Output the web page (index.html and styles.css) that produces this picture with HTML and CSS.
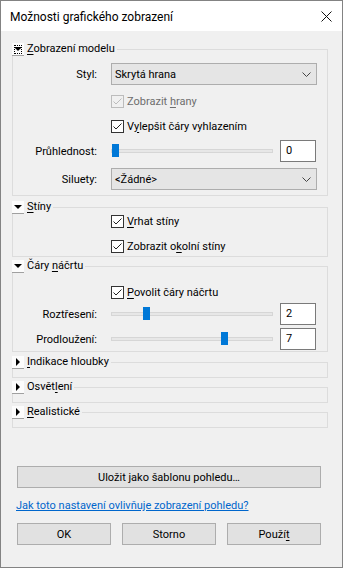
FILE: index.html
```html
<!DOCTYPE html>
<html lang="cs">
<head>
  <meta charset="UTF-8">
  <title>Možnosti grafického zobrazení</title>
  <link rel="stylesheet" href="styles.css">
</head>
<body>
  <div class="window">
    <div class="titlebar">
      <span class="title">Možnosti grafického zobrazení</span>
      <svg class="close" width="11" height="11" viewBox="0 0 11 11">
        <path d="M0.5 0.5 L10.5 10.5 M10.5 0.5 L0.5 10.5" stroke="#111" stroke-width="1" fill="none"/>
      </svg>
    </div>

    <div class="content">
      <!-- Zobrazeni modelu -->
      <fieldset class="group group-model">
        <legend>
          <span class="toggle focused"><span class="arrow-down"></span></span>
          <span class="caption"><u>Z</u>obrazení modelu</span>
        </legend>
        <div class="field first-select">
          <span class="label">Styl:</span>
          <div class="select">Skrytá hrana
            <svg class="chevron" width="9" height="5" viewBox="0 0 9 5"><path d="M0.5 0.5 L4.5 4.5 L8.5 0.5" stroke="#444" fill="none"/></svg>
          </div>
        </div>
        <div class="check-row hrany">
          <span class="check disabled">
            <svg width="11" height="11" viewBox="0 0 11 11"><path d="M1.5 5.5 L4 8 L9.5 2.5" stroke="#bcbcbc" fill="none"/></svg>
          </span>
          <span class="check-text disabled-text">Zobrazit <u>h</u>rany</span>
        </div>
        <div class="check-row vyhlazeni">
          <span class="check">
            <svg width="11" height="11" viewBox="0 0 11 11"><path d="M1.5 5.5 L4 8 L9.5 2.5" stroke="#222" fill="none"/></svg>
          </span>
          <span class="check-text">V<u>y</u>lepšit čáry vyhlazením</span>
        </div>
        <div class="field slider-row pruhlednost">
          <span class="label">Průhlednost:</span>
          <div class="slider"><span class="track"></span><span class="thumb" style="--v: 0"></span></div>
          <div class="number">0</div>
        </div>
        <div class="field siluety">
          <span class="label">Siluety:</span>
          <div class="select">&lt;Žádné&gt;
            <svg class="chevron" width="9" height="5" viewBox="0 0 9 5"><path d="M0.5 0.5 L4.5 4.5 L8.5 0.5" stroke="#444" fill="none"/></svg>
          </div>
        </div>
      </fieldset>

      <!-- Stiny -->
      <fieldset class="group group-shadows">
        <legend>
          <span class="toggle"><span class="arrow-down"></span></span>
          <span class="caption"><u>S</u>tíny</span>
        </legend>
        <div class="check-row">
          <span class="check">
            <svg width="11" height="11" viewBox="0 0 11 11"><path d="M1.5 5.5 L4 8 L9.5 2.5" stroke="#222" fill="none"/></svg>
          </span>
          <span class="check-text"><u>V</u>rhat stíny</span>
        </div>
        <div class="check-row okolni">
          <span class="check">
            <svg width="11" height="11" viewBox="0 0 11 11"><path d="M1.5 5.5 L4 8 L9.5 2.5" stroke="#222" fill="none"/></svg>
          </span>
          <span class="check-text">Zobrazit o<u>k</u>olní stíny</span>
        </div>
      </fieldset>

      <!-- Cary nacrtu -->
      <fieldset class="group group-sketch">
        <legend>
          <span class="toggle"><span class="arrow-down"></span></span>
          <span class="caption">Čáry <u>n</u>áčrtu</span>
        </legend>
        <div class="check-row povolit">
          <span class="check">
            <svg width="11" height="11" viewBox="0 0 11 11"><path d="M1.5 5.5 L4 8 L9.5 2.5" stroke="#222" fill="none"/></svg>
          </span>
          <span class="check-text"><u>P</u>ovolit čáry náčrtu</span>
        </div>
        <div class="field slider-row roztreseni">
          <span class="label">Roztřesení:</span>
          <div class="slider"><span class="track"></span><span class="thumb" style="--v: 2"></span></div>
          <div class="number">2</div>
        </div>
        <div class="field slider-row prodlouzeni">
          <span class="label">Prodloužení:</span>
          <div class="slider"><span class="track"></span><span class="thumb" style="--v: 7"></span></div>
          <div class="number">7</div>
        </div>
      </fieldset>

      <!-- Collapsed groups -->
      <fieldset class="group collapsed">
        <legend>
          <span class="toggle"><span class="arrow-right"></span></span>
          <span class="caption"><u>I</u>ndikace hloubky</span>
        </legend>
      </fieldset>
      <fieldset class="group collapsed">
        <legend>
          <span class="toggle"><span class="arrow-right"></span></span>
          <span class="caption">Osvět<u>l</u>ení</span>
        </legend>
      </fieldset>
      <fieldset class="group collapsed">
        <legend>
          <span class="toggle"><span class="arrow-right"></span></span>
          <span class="caption"><u>R</u>ealistické</span>
        </legend>
      </fieldset>

      <button class="btn save-btn">Uložit jako šablonu pohledu…</button>

      <a class="help-link" href="#">Jak toto nastavení ovlivňuje zobrazení pohledu?</a>

      <div class="buttons">
        <button class="btn">OK</button>
        <button class="btn">Storno</button>
        <button class="btn">Použí<u>t</u></button>
      </div>
    </div>
  </div>
</body>
</html>
```

FILE: styles.css
```css
body {
  margin: 0;
  font-family: Roboto, "Noto Sans", sans-serif;
  font-size: 11px;
  color: #000;
  background-color: #f0f0f0;
}
u {
  text-decoration: underline;
  text-underline-offset: 2px;
}
.window {
  width: 343px;
  height: 568px;
  box-sizing: border-box;
  border: 1px solid #838383;
  background-color: #f0f0f0;
}
.titlebar {
  height: 30px;
  background-color: white;
  display: flex;
  align-items: center;
  justify-content: space-between;
  padding: 0 10px 0 9px;
}
.title {
  font-size: 12px;
  margin-top: 1px;
}
.close {
  margin-top: 1px;
}
.content {
  padding: 11px 14px 0 11px;
}

/* group boxes */
.group {
  margin: 0;
  padding: 0 0 8px 0;
  border: 1px solid #dcdcdc;
  min-width: 0;
}
.group legend {
  display: flex;
  align-items: center;
  gap: 3px;
  height: 14px;
  margin-left: -1px;
  padding: 0 2px 0 0;
  line-height: 14px;
}
.toggle {
  width: 12px;
  height: 13px;
  background-color: #fcfcfc;
  border-bottom: 1px solid #a0a0a0;
  display: flex;
  align-items: center;
  justify-content: center;
  box-sizing: border-box;
}
.toggle.focused {
  outline: 1px dotted #000;
  outline-offset: -3px;
}
.arrow-down {
  width: 0;
  height: 0;
  border-left: 4px solid transparent;
  border-right: 4px solid transparent;
  border-top: 4px solid #000;
}
.arrow-right {
  width: 0;
  height: 0;
  border-top: 4px solid transparent;
  border-bottom: 4px solid transparent;
  border-left: 4px solid #000;
}
.group-model {
  padding-bottom: 5px;
}
.group-shadows {
  margin-top: 4px;
  padding-bottom: 3px;
}
.group-sketch {
  margin-top: 2px;
  padding-bottom: 1px;
}
.collapsed {
  margin-top: 2px;
  padding-bottom: 8px;
}
.group-sketch + .collapsed {
  margin-top: 3px;
}

/* rows */
.field {
  display: flex;
  align-items: center;
  height: 22px;
}
.label {
  width: 84px;
  margin-right: 14px;
  text-align: right;
}
.first-select {
  margin-top: 7px;
}
.siluety {
  margin-top: 6px;
}
.select {
  width: 206px;
  height: 22px;
  box-sizing: border-box;
  border: 1px solid #adadad;
  background-color: #e5e5e5;
  padding: 0 5px 0 3px;
  display: flex;
  align-items: center;
  justify-content: space-between;
}
.check-row {
  display: flex;
  align-items: center;
  height: 14px;
  padding-left: 98px;
  gap: 3px;
}
.hrany {
  margin-top: 9px;
}
.vyhlazeni {
  margin-top: 11px;
}
.okolni {
  margin-top: 11px;
}
.povolit {
  margin-top: 12px;
}
.check {
  width: 13px;
  height: 13px;
  box-sizing: border-box;
  border: 1px solid #333;
  background-color: white;
  display: flex;
}
.check.disabled {
  border-color: #bcbcbc;
  background-color: #f0f0f0;
}
.disabled-text {
  color: #6d6d6d;
}

/* sliders */
.pruhlednost {
  margin-top: 7px;
}
.roztreseni {
  margin-top: 4px;
}
.prodlouzeni {
  margin-top: 3px;
}
.slider {
  position: relative;
  width: 162px;
  height: 22px;
  display: flex;
  align-items: center;
}
.track {
  width: 100%;
  height: 4px;
  box-sizing: border-box;
  background-color: #e7e7e7;
  border: 1px solid #d6d6d6;
}
.thumb {
  position: absolute;
  top: 4px;
  left: calc(var(--v) * 15.5px + 1px);
  width: 7px;
  height: 13px;
  background-color: #0078d7;
}
.number {
  width: 36px;
  height: 22px;
  box-sizing: border-box;
  margin-left: 7px;
  border: 1px solid #7a7a7a;
  background-color: white;
  padding-left: 5px;
  line-height: 19px;
}

/* bottom buttons */
.btn {
  font-family: inherit;
  font-size: 11px;
  color: #000;
  background-color: #e1e1e1;
  border: 1px solid #adadad;
  height: 22px;
  padding: 0;
  cursor: pointer;
}
.save-btn {
  display: block;
  width: 304px;
  margin: 38px 0 0 5px;
}
.help-link {
  display: block;
  margin: 11px 0 0 4px;
  line-height: 14px;
  color: #0066cc;
}
.buttons {
  display: flex;
  gap: 11px;
  margin: 10px 0 0 5px;
}
.buttons .btn {
  width: 94px;
}
```
